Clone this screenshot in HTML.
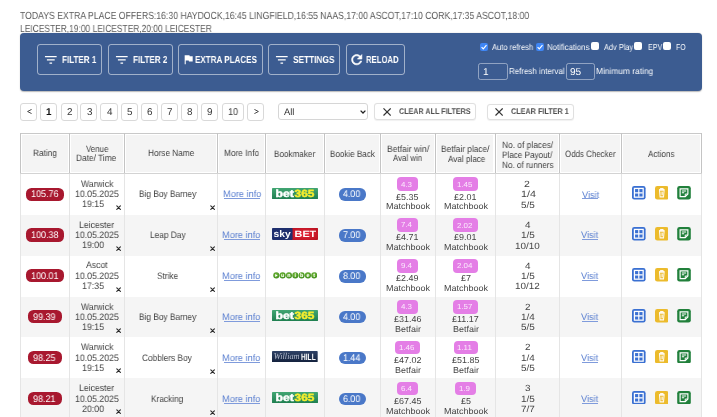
<!DOCTYPE html>
<html><head><meta charset="utf-8">
<style>
*{box-sizing:border-box;margin:0;padding:0}
html,body{width:717px;height:417px;overflow:hidden;background:#fff;font-family:"Liberation Sans",sans-serif;color:#444;text-rendering:geometricPrecision}
.t{position:absolute;white-space:nowrap;transform-origin:0 0;will-change:transform}
.b{position:absolute;display:block}
</style></head><body>
<span class="t" style="left:20.49px;top:9.61px;font-size:10.30px;line-height:14px;transform:scaleX(0.8409);color:#5a5a5a;">TODAYS EXTRA PLACE OFFERS:16:30 HAYDOCK,16:45 LINGFIELD,16:55 NAAS,17:00 ASCOT,17:10 CORK,17:35 ASCOT,18:00</span>
<span class="t" style="left:19.82px;top:22.71px;font-size:10.30px;line-height:14px;transform:scaleX(0.8175);color:#5a5a5a;">LEICESTER,19:00 LEICESTER,20:00 LEICESTER</span>
<div class="b" style="left:20.00px;top:33.00px;width:681.50px;height:58.20px;background:#3c5c91;border-radius:4px;box-shadow:0 0.8px 1.2px rgba(0,0,0,.28)"></div>
<div class="b" style="left:36.80px;top:44.40px;width:65.70px;height:30.40px;border:1px solid rgba(255,255,255,.52);border-radius:3px"></div>
<div class="b" style="left:107.80px;top:44.40px;width:65.00px;height:30.40px;border:1px solid rgba(255,255,255,.52);border-radius:3px"></div>
<div class="b" style="left:178.20px;top:44.40px;width:84.70px;height:30.40px;border:1px solid rgba(255,255,255,.52);border-radius:3px"></div>
<div class="b" style="left:268.30px;top:44.40px;width:71.60px;height:30.40px;border:1px solid rgba(255,255,255,.52);border-radius:3px"></div>
<div class="b" style="left:345.50px;top:44.40px;width:59.60px;height:30.40px;border:1px solid rgba(255,255,255,.52);border-radius:3px"></div>
<svg class="b" style="left:43.05px;top:52.1px" width="15.6" height="15.6" viewBox="0 0 24 24"><path d="M10 18h4v-2h-4v2zM3 6v2h18V6H3zm3 7h12v-2H6v2z" fill="#fff"/></svg>
<svg class="b" style="left:114.05px;top:52.1px" width="15.6" height="15.6" viewBox="0 0 24 24"><path d="M10 18h4v-2h-4v2zM3 6v2h18V6H3zm3 7h12v-2H6v2z" fill="#fff"/></svg>
<svg class="b" style="left:273.65px;top:52.1px" width="15.6" height="15.6" viewBox="0 0 24 24"><path d="M10 18h4v-2h-4v2zM3 6v2h18V6H3zm3 7h12v-2H6v2z" fill="#fff"/></svg>
<svg class="b" style="left:181.9px;top:52.66px" width="12.84" height="12.84" viewBox="0 0 24 24"><path d="M14.4 6L14 4H5v17h2v-7h5.6l.4 2h7V6z" fill="#fff"/></svg>
<svg class="b" style="left:349.2px;top:52.0px" width="15.45" height="15.45" viewBox="0 0 24 24"><path d="M17.65 6.35C16.2 4.9 14.21 4 12 4c-4.42 0-7.99 3.58-7.99 8s3.57 8 7.99 8c3.73 0 6.84-2.55 7.73-6h-2.08c-.82 2.33-3.04 4-5.65 4-3.31 0-6-2.69-6-6s2.69-6 6-6c1.66 0 3.14.69 4.22 1.78L13 11h7V4l-2.35 2.35z" fill="#fff" stroke="#fff" stroke-width="0.9"/></svg>
<span class="t" style="left:62.31px;top:53.71px;font-size:10.20px;line-height:14px;transform:scaleX(0.7908);color:#fff;font-weight:bold;">FILTER 1</span>
<span class="t" style="left:133.35px;top:53.64px;font-size:10.20px;line-height:14px;transform:scaleX(0.7926);color:#fff;font-weight:bold;">FILTER 2</span>
<span class="t" style="left:195.30px;top:53.64px;font-size:10.20px;line-height:14px;transform:scaleX(0.7905);color:#fff;font-weight:bold;">EXTRA PLACES</span>
<span class="t" style="left:293.38px;top:53.64px;font-size:10.20px;line-height:14px;transform:scaleX(0.8120);color:#fff;font-weight:bold;">SETTINGS</span>
<span class="t" style="left:366.44px;top:53.64px;font-size:10.20px;line-height:14px;transform:scaleX(0.7564);color:#fff;font-weight:bold;">RELOAD</span>
<div class="b" style="left:480.3px;top:43px;width:8.2px;height:8px;background:#3f86f5;border-radius:2px"><svg width="8" height="8" viewBox="0 0 8 8" style="display:block"><path d="M1.6 4.1l1.7 1.7 3.2-3.6" stroke="#fff" stroke-width="1.2" fill="none"/></svg></div>
<div class="b" style="left:535.7px;top:43px;width:8.2px;height:8px;background:#3f86f5;border-radius:2px"><svg width="8" height="8" viewBox="0 0 8 8" style="display:block"><path d="M1.6 4.1l1.7 1.7 3.2-3.6" stroke="#fff" stroke-width="1.2" fill="none"/></svg></div>
<div class="b" style="left:591.20px;top:42.40px;width:8.20px;height:8.00px;background:#fff;border-radius:2px"></div>
<div class="b" style="left:634.20px;top:42.40px;width:8.20px;height:8.00px;background:#fff;border-radius:2px"></div>
<div class="b" style="left:662.90px;top:42.40px;width:8.20px;height:8.00px;background:#fff;border-radius:2px"></div>
<span class="t" style="left:491.66px;top:40.53px;font-size:8.60px;line-height:12px;transform:scaleX(0.8796);color:#f7f9fc;">Auto refresh</span>
<span class="t" style="left:546.92px;top:40.61px;font-size:8.60px;line-height:12px;transform:scaleX(0.9046);color:#f7f9fc;">Notifications</span>
<span class="t" style="left:603.89px;top:40.60px;font-size:8.60px;line-height:12px;transform:scaleX(0.8591);color:#f7f9fc;">Adv Play</span>
<span class="t" style="left:647.58px;top:40.93px;font-size:8.60px;line-height:12px;transform:scaleX(0.8310);color:#f7f9fc;">EPV</span>
<span class="t" style="left:675.87px;top:41.02px;font-size:8.60px;line-height:12px;transform:scaleX(0.8019);color:#f7f9fc;">FO</span>
<div class="b" style="left:478.10px;top:63.20px;width:30.10px;height:16.70px;border:1px solid rgba(215,222,235,.55);border-radius:2.5px"></div>
<div class="b" style="left:565.90px;top:63.20px;width:29.10px;height:16.70px;border:1px solid rgba(215,222,235,.55);border-radius:2.5px"></div>
<span class="t" style="left:570.20px;top:65.55px;font-size:10.00px;line-height:13px;transform:scaleX(1.0112);color:#fff;">95</span>
<span class="t" style="left:482.53px;top:65.59px;font-size:10.00px;line-height:13px;transform:scaleX(1.0112);color:#fff;">1</span>
<span class="t" style="left:508.96px;top:65.10px;font-size:8.60px;line-height:12px;transform:scaleX(0.9223);color:#f7f9fc;">Refresh interval</span>
<span class="t" style="left:596.39px;top:65.15px;font-size:8.60px;line-height:12px;transform:scaleX(0.9731);color:#f7f9fc;">Minimum rating</span>
<div class="b" style="left:20.20px;top:103.30px;width:16.40px;height:17.30px;border:1px solid #d9d9d9;border-radius:3px;background:#fff"></div>
<div class="b" style="left:40.10px;top:103.30px;width:16.70px;height:17.30px;border:1px solid #d9d9d9;border-radius:3px;background:#fff"></div>
<div class="b" style="left:61.10px;top:103.30px;width:16.60px;height:17.30px;border:1px solid #d9d9d9;border-radius:3px;background:#fff"></div>
<div class="b" style="left:80.30px;top:103.30px;width:17.20px;height:17.30px;border:1px solid #d9d9d9;border-radius:3px;background:#fff"></div>
<div class="b" style="left:100.40px;top:103.30px;width:17.20px;height:17.30px;border:1px solid #d9d9d9;border-radius:3px;background:#fff"></div>
<div class="b" style="left:120.80px;top:103.30px;width:17.00px;height:17.30px;border:1px solid #d9d9d9;border-radius:3px;background:#fff"></div>
<div class="b" style="left:140.70px;top:103.30px;width:17.20px;height:17.30px;border:1px solid #d9d9d9;border-radius:3px;background:#fff"></div>
<div class="b" style="left:160.80px;top:103.30px;width:17.20px;height:17.30px;border:1px solid #d9d9d9;border-radius:3px;background:#fff"></div>
<div class="b" style="left:180.90px;top:103.30px;width:17.20px;height:17.30px;border:1px solid #d9d9d9;border-radius:3px;background:#fff"></div>
<div class="b" style="left:201.00px;top:103.30px;width:17.20px;height:17.30px;border:1px solid #d9d9d9;border-radius:3px;background:#fff"></div>
<div class="b" style="left:221.50px;top:103.30px;width:22.80px;height:17.30px;border:1px solid #d9d9d9;border-radius:3px;background:#fff"></div>
<div class="b" style="left:247.20px;top:103.30px;width:16.70px;height:17.30px;border:1px solid #d9d9d9;border-radius:3px;background:#fff"></div>
<svg class="b" style="left:26.5px;top:109.3px" width="5" height="5" viewBox="0 0 5 5"><path d="M4.6 0.4L0.6 2.5l4 2.1" stroke="#333" stroke-width="0.9" fill="none"/></svg>
<svg class="b" style="left:253.5px;top:109.3px" width="5" height="5" viewBox="0 0 5 5"><path d="M0.4 0.4L4.4 2.5l-4 2.1" stroke="#333" stroke-width="0.9" fill="none"/></svg>
<span class="t" style="left:66.57px;top:105.93px;font-size:9.90px;line-height:13px;transform:scaleX(0.9200);color:#3a3a3a;">2</span>
<span class="t" style="left:46.04px;top:105.83px;font-size:9.90px;line-height:13px;transform:scaleX(0.9233);color:#111;font-weight:bold;">1</span>
<span class="t" style="left:86.67px;top:105.93px;font-size:9.90px;line-height:13px;transform:scaleX(0.9200);color:#3a3a3a;">3</span>
<span class="t" style="left:106.82px;top:105.83px;font-size:9.90px;line-height:13px;transform:scaleX(0.9200);color:#3a3a3a;">4</span>
<span class="t" style="left:127.07px;top:105.83px;font-size:9.90px;line-height:13px;transform:scaleX(0.9200);color:#3a3a3a;">5</span>
<span class="t" style="left:147.03px;top:105.93px;font-size:9.90px;line-height:13px;transform:scaleX(0.9200);color:#3a3a3a;">6</span>
<span class="t" style="left:167.17px;top:105.83px;font-size:9.90px;line-height:13px;transform:scaleX(0.9200);color:#3a3a3a;">7</span>
<span class="t" style="left:187.25px;top:105.93px;font-size:9.90px;line-height:13px;transform:scaleX(0.9200);color:#3a3a3a;">8</span>
<span class="t" style="left:207.37px;top:105.93px;font-size:9.90px;line-height:13px;transform:scaleX(0.9200);color:#3a3a3a;">9</span>
<span class="t" style="left:227.96px;top:105.93px;font-size:9.90px;line-height:13px;transform:scaleX(0.9200);color:#3a3a3a;">10</span>
<div class="b" style="left:278.30px;top:103.30px;width:89.30px;height:16.80px;border:1px solid #d6d6d6;border-radius:3px;background:#fff"></div>
<span class="t" style="left:284.31px;top:105.43px;font-size:9.40px;line-height:13px;transform:scaleX(0.9950);color:#333;">All</span>
<svg class="b" style="left:359.6px;top:109.6px" width="6" height="4" viewBox="0 0 6 4"><path d="M0.6 0.6l2.4 2.4 2.4-2.4" stroke="#222" stroke-width="1.3" fill="none"/></svg>
<div class="b" style="left:373.60px;top:103.40px;width:102.50px;height:16.60px;border:1px solid #e0e0e0;border-radius:3px;background:#fff;box-shadow:0 0.5px 1px rgba(0,0,0,.06)"></div>
<div class="b" style="left:486.50px;top:103.60px;width:87.90px;height:16.50px;border:1px solid #e0e0e0;border-radius:3px;background:#fff;box-shadow:0 0.5px 1px rgba(0,0,0,.06)"></div>
<svg class="b" style="left:382.9px;top:108px" width="8.2" height="7.9" viewBox="0 0 8.2 7.9"><path d="M0.5 0.4l7.2 7.1M7.7 0.4l-7.2 7.1" stroke="#333" stroke-width="1.2"/></svg>
<svg class="b" style="left:495.3px;top:108px" width="8.2" height="7.9" viewBox="0 0 8.2 7.9"><path d="M0.5 0.4l7.2 7.1M7.7 0.4l-7.2 7.1" stroke="#333" stroke-width="1.2"/></svg>
<span class="t" style="left:398.50px;top:106.45px;font-size:8.30px;line-height:11px;transform:scaleX(0.8643);color:#505050;font-weight:bold;">CLEAR ALL FILTERS</span>
<span class="t" style="left:510.98px;top:106.45px;font-size:8.30px;line-height:11px;transform:scaleX(0.8722);color:#505050;font-weight:bold;">CLEAR FILTER 1</span>
<div class="b" style="left:21.60px;top:134.90px;width:46.20px;height:37.60px;background:#f4f4f4"></div>
<div class="b" style="left:71.00px;top:134.90px;width:52.00px;height:37.60px;background:#f4f4f4"></div>
<div class="b" style="left:126.20px;top:134.90px;width:89.50px;height:37.60px;background:#f4f4f4"></div>
<div class="b" style="left:218.90px;top:134.90px;width:44.80px;height:37.60px;background:#f4f4f4"></div>
<div class="b" style="left:266.90px;top:134.90px;width:55.90px;height:37.60px;background:#f4f4f4"></div>
<div class="b" style="left:326.00px;top:134.90px;width:52.60px;height:37.60px;background:#f4f4f4"></div>
<div class="b" style="left:381.80px;top:134.90px;width:52.00px;height:37.60px;background:#f4f4f4"></div>
<div class="b" style="left:437.00px;top:134.90px;width:56.40px;height:37.60px;background:#f4f4f4"></div>
<div class="b" style="left:496.60px;top:134.90px;width:61.20px;height:37.60px;background:#f4f4f4"></div>
<div class="b" style="left:561.00px;top:134.90px;width:59.10px;height:37.60px;background:#f4f4f4"></div>
<div class="b" style="left:623.30px;top:134.90px;width:76.60px;height:37.60px;background:#f4f4f4"></div>
<div class="b" style="left:20.00px;top:214.80px;width:681.50px;height:40.90px;background:#f5f5f5"></div>
<div class="b" style="left:20.00px;top:296.60px;width:681.50px;height:40.90px;background:#f5f5f5"></div>
<div class="b" style="left:20.00px;top:378.40px;width:681.50px;height:40.90px;background:#f5f5f5"></div>
<div class="b" style="left:19.50px;top:132.90px;width:682.50px;height:1.00px;background:#c9c9c9"></div>
<div class="b" style="left:19.50px;top:173.10px;width:682.50px;height:1.00px;background:#d3d3d3"></div>
<div class="b" style="left:19.50px;top:133.00px;width:1.00px;height:40.00px;background:#c4c4c4"></div>
<div class="b" style="left:19.50px;top:174.00px;width:1.00px;height:243.00px;background:#e5e5e5"></div>
<div class="b" style="left:68.90px;top:133.00px;width:1.00px;height:40.00px;background:#c4c4c4"></div>
<div class="b" style="left:68.90px;top:174.00px;width:1.00px;height:243.00px;background:#e5e5e5"></div>
<div class="b" style="left:124.10px;top:133.00px;width:1.00px;height:40.00px;background:#c4c4c4"></div>
<div class="b" style="left:124.10px;top:174.00px;width:1.00px;height:243.00px;background:#e5e5e5"></div>
<div class="b" style="left:216.80px;top:133.00px;width:1.00px;height:40.00px;background:#c4c4c4"></div>
<div class="b" style="left:216.80px;top:174.00px;width:1.00px;height:243.00px;background:#e5e5e5"></div>
<div class="b" style="left:264.80px;top:133.00px;width:1.00px;height:40.00px;background:#c4c4c4"></div>
<div class="b" style="left:264.80px;top:174.00px;width:1.00px;height:243.00px;background:#e5e5e5"></div>
<div class="b" style="left:323.90px;top:133.00px;width:1.00px;height:40.00px;background:#c4c4c4"></div>
<div class="b" style="left:323.90px;top:174.00px;width:1.00px;height:243.00px;background:#e5e5e5"></div>
<div class="b" style="left:379.70px;top:133.00px;width:1.00px;height:40.00px;background:#c4c4c4"></div>
<div class="b" style="left:379.70px;top:174.00px;width:1.00px;height:243.00px;background:#e5e5e5"></div>
<div class="b" style="left:434.90px;top:133.00px;width:1.00px;height:40.00px;background:#c4c4c4"></div>
<div class="b" style="left:434.90px;top:174.00px;width:1.00px;height:243.00px;background:#e5e5e5"></div>
<div class="b" style="left:494.50px;top:133.00px;width:1.00px;height:40.00px;background:#c4c4c4"></div>
<div class="b" style="left:494.50px;top:174.00px;width:1.00px;height:243.00px;background:#e5e5e5"></div>
<div class="b" style="left:558.90px;top:133.00px;width:1.00px;height:40.00px;background:#c4c4c4"></div>
<div class="b" style="left:558.90px;top:174.00px;width:1.00px;height:243.00px;background:#e5e5e5"></div>
<div class="b" style="left:621.20px;top:133.00px;width:1.00px;height:40.00px;background:#c4c4c4"></div>
<div class="b" style="left:621.20px;top:174.00px;width:1.00px;height:243.00px;background:#e5e5e5"></div>
<div class="b" style="left:701.00px;top:133.00px;width:1.00px;height:40.00px;background:#c4c4c4"></div>
<div class="b" style="left:701.00px;top:174.00px;width:1.00px;height:243.00px;background:#e5e5e5"></div>
<span class="t" style="left:33.26px;top:147.13px;font-size:9.20px;line-height:12px;transform:scaleX(0.8982);color:#404040;">Rating</span>
<span class="t" style="left:86.08px;top:142.53px;font-size:9.20px;line-height:12px;transform:scaleX(0.8636);color:#404040;">Venue</span>
<span class="t" style="left:76.36px;top:151.82px;font-size:9.20px;line-height:12px;transform:scaleX(0.9072);color:#404040;">Date/ Time</span>
<span class="t" style="left:148.25px;top:146.85px;font-size:9.20px;line-height:12px;transform:scaleX(0.8969);color:#404040;">Horse Name</span>
<span class="t" style="left:224.27px;top:147.49px;font-size:9.20px;line-height:12px;transform:scaleX(0.9041);color:#404040;">More Info</span>
<span class="t" style="left:274.03px;top:147.72px;font-size:9.20px;line-height:12px;transform:scaleX(0.8835);color:#404040;">Bookmaker</span>
<span class="t" style="left:329.59px;top:147.69px;font-size:9.20px;line-height:12px;transform:scaleX(0.8770);color:#404040;">Bookie Back</span>
<span class="t" style="left:386.51px;top:142.95px;font-size:9.20px;line-height:12px;transform:scaleX(0.9268);color:#404040;">Betfair win/</span>
<span class="t" style="left:393.49px;top:151.83px;font-size:9.20px;line-height:12px;transform:scaleX(0.8546);color:#404040;">Aval win</span>
<span class="t" style="left:441.31px;top:142.87px;font-size:9.20px;line-height:12px;transform:scaleX(0.9037);color:#404040;">Betfair place/</span>
<span class="t" style="left:447.71px;top:153.16px;font-size:9.20px;line-height:12px;transform:scaleX(0.8855);color:#404040;">Aval place</span>
<span class="t" style="left:501.99px;top:138.84px;font-size:9.20px;line-height:12px;transform:scaleX(0.9124);color:#404040;">No. of places/</span>
<span class="t" style="left:502.39px;top:149.28px;font-size:9.20px;line-height:12px;transform:scaleX(0.8858);color:#404040;">Place Payout/</span>
<span class="t" style="left:502.01px;top:159.08px;font-size:9.20px;line-height:12px;transform:scaleX(0.8861);color:#404040;">No. of runners</span>
<span class="t" style="left:565.17px;top:147.80px;font-size:9.20px;line-height:12px;transform:scaleX(0.8616);color:#404040;">Odds Checker</span>
<span class="t" style="left:648.39px;top:147.66px;font-size:9.20px;line-height:12px;transform:scaleX(0.8785);color:#404040;">Actions</span>
<div class="b" style="left:25.98px;top:187.50px;width:38.25px;height:13.20px;background:#a8182f;border-radius:5.5px"></div>
<span class="t" style="left:31.14px;top:188.41px;font-size:9.70px;line-height:13px;transform:scaleX(0.9302);color:#fff;">105.76</span>
<span class="t" style="left:81.12px;top:176.80px;font-size:9.40px;line-height:13px;transform:scaleX(0.9233);color:#444444;">Warwick</span>
<span class="t" style="left:75.27px;top:187.28px;font-size:9.40px;line-height:13px;transform:scaleX(0.9339);color:#444444;">10.05.2025</span>
<span class="t" style="left:82.39px;top:197.06px;font-size:9.40px;line-height:13px;transform:scaleX(0.9404);color:#444444;">19:15</span>
<svg class="b" style="left:116.40px;top:204.80px" width="5.2" height="5.2" viewBox="0 0 5.2 5.2"><path d="M0.8 0.8l3.6 3.6M4.4 0.8l-3.6 3.6" stroke="#2a2a2a" stroke-width="1.15" stroke-linecap="round"/></svg>
<svg class="b" style="left:210.00px;top:205.00px" width="5.2" height="5.2" viewBox="0 0 5.2 5.2"><path d="M0.8 0.8l3.6 3.6M4.4 0.8l-3.6 3.6" stroke="#2a2a2a" stroke-width="1.15" stroke-linecap="round"/></svg>
<span class="t" style="left:138.72px;top:187.34px;font-size:9.40px;line-height:13px;transform:scaleX(0.8849);color:#444444;">Big Boy Barney</span>
<span class="t" style="left:222.54px;top:188.30px;font-size:9.50px;line-height:13px;transform:scaleX(0.9671);color:#5a7fd0;">More info</span>
<div class="b" style="left:223.70px;top:198.00px;width:36.10px;height:0.80px;background:#7f9bdc"></div>
<svg class="b" style="left:272px;top:187.70px" width="46" height="11.1" viewBox="0 0 46 11.1"><defs><linearGradient id="g365" x1="0" y1="0" x2="0" y2="1"><stop offset="0" stop-color="#42a673"/><stop offset="1" stop-color="#1f7f50"/></linearGradient></defs><rect width="46" height="11.1" rx="0.6" fill="url(#g365)"/><text x="3.6" y="9.0" font-family="Liberation Sans" font-weight="bold" font-size="10.4" fill="#fff" stroke="#fff" stroke-width="0.45" textLength="18.3" lengthAdjust="spacingAndGlyphs">bet</text><text x="22.6" y="9.0" font-family="Liberation Sans" font-weight="bold" font-size="10.4" fill="#f4ec2e" stroke="#f4ec2e" stroke-width="0.45" textLength="19.8" lengthAdjust="spacingAndGlyphs">365</text></svg>
<div class="b" style="left:338.60px;top:188.00px;width:27.40px;height:12.80px;background:#4a78c8;border-radius:6px"></div>
<span class="t" style="left:343.45px;top:188.27px;font-size:9.70px;line-height:13px;transform:scaleX(0.9140);color:#fff;">4.00</span>
<div class="b" style="left:396.79px;top:177.00px;width:21.62px;height:13.90px;background:#e47ee6;border-radius:4px"></div>
<div class="b" style="left:453.32px;top:177.00px;width:24.86px;height:13.90px;background:#e47ee6;border-radius:4px"></div>
<span class="t" style="left:457.21px;top:179.54px;font-size:7.30px;line-height:10px;transform:scaleX(1.0852);color:#fbeafc;">1.45</span>
<span class="t" style="left:454.24px;top:190.54px;font-size:8.60px;line-height:12px;transform:scaleX(1.0411);color:#444444;">£2.01</span>
<span class="t" style="left:444.03px;top:200.38px;font-size:8.60px;line-height:12px;transform:scaleX(1.0471);color:#444444;">Matchbook</span>
<span class="t" style="left:401.13px;top:179.62px;font-size:7.30px;line-height:10px;transform:scaleX(1.0852);color:#fbeafc;">4.3</span>
<span class="t" style="left:396.41px;top:190.54px;font-size:8.60px;line-height:12px;transform:scaleX(1.0411);color:#444444;">£5.35</span>
<span class="t" style="left:385.52px;top:200.38px;font-size:8.60px;line-height:12px;transform:scaleX(1.0471);color:#444444;">Matchbook</span>
<span class="t" style="left:521.14px;top:198.64px;font-size:9.00px;line-height:12px;transform:scaleX(1.1007);color:#444444;">5/5</span>
<span class="t" style="left:524.39px;top:177.82px;font-size:9.00px;line-height:12px;transform:scaleX(1.1669);color:#444444;">2</span>
<span class="t" style="left:520.66px;top:188.15px;font-size:9.00px;line-height:12px;transform:scaleX(1.1898);color:#444444;">1/4</span>
<span class="t" style="left:581.68px;top:188.51px;font-size:9.50px;line-height:13px;transform:scaleX(0.9621);color:#5a7fd0;">Visit</span>
<div class="b" style="left:582.30px;top:198.20px;width:16.10px;height:0.80px;background:#7f9bdc"></div>
<svg class="b" style="left:632.3px;top:186.30px" width="13.6" height="13.6" viewBox="0 0 14 14"><rect width="14" height="14" rx="2.4" fill="#3a70d2"/><rect x="2.5" y="2.5" width="9" height="9" fill="none" stroke="#fff" stroke-width="1.3"/><path d="M7 3v8M3 7h8" stroke="#fff" stroke-width="1.2"/></svg><svg class="b" style="left:654.8px;top:186.30px" width="13.6" height="13.6" viewBox="0 0 14 14"><rect width="14" height="14" rx="2.4" fill="#ecbb2c"/><path d="M4.2 3.6h5.6M5.8 3.4v-0.8h2.4v0.8M4.6 4.4l0.6 6.8h3.6l0.6-6.8z" stroke="#fffaf0" stroke-width="1.05" fill="none"/><path d="M6.3 5.8v3.8M7.7 5.8v3.8" stroke="#fffaf0" stroke-width="0.8"/></svg><svg class="b" style="left:677px;top:186.30px" width="14" height="13.6" viewBox="0 0 14 14"><rect width="14" height="14" rx="2.4" fill="#21803b"/><path d="M3 3h8v5.3l-2.7 2.7h-5.3z" fill="none" stroke="#fff" stroke-width="1.2"/><path d="M8.3 11v-2.7h2.7" fill="none" stroke="#fff" stroke-width="1"/><path d="M4.8 5.2h4.4M4.8 7h2.4" stroke="#fff" stroke-width="1.1"/></svg>
<div class="b" style="left:25.98px;top:228.40px;width:38.25px;height:13.20px;background:#a8182f;border-radius:5.5px"></div>
<span class="t" style="left:30.55px;top:229.31px;font-size:9.70px;line-height:13px;transform:scaleX(0.9302);color:#fff;">100.38</span>
<span class="t" style="left:79.14px;top:217.70px;font-size:9.40px;line-height:13px;transform:scaleX(0.9233);color:#444444;">Leicester</span>
<span class="t" style="left:74.60px;top:228.18px;font-size:9.40px;line-height:13px;transform:scaleX(0.9339);color:#444444;">10.05.2025</span>
<span class="t" style="left:82.18px;top:237.96px;font-size:9.40px;line-height:13px;transform:scaleX(0.9404);color:#444444;">19:00</span>
<svg class="b" style="left:116.40px;top:245.70px" width="5.2" height="5.2" viewBox="0 0 5.2 5.2"><path d="M0.8 0.8l3.6 3.6M4.4 0.8l-3.6 3.6" stroke="#2a2a2a" stroke-width="1.15" stroke-linecap="round"/></svg>
<svg class="b" style="left:210.00px;top:245.90px" width="5.2" height="5.2" viewBox="0 0 5.2 5.2"><path d="M0.8 0.8l3.6 3.6M4.4 0.8l-3.6 3.6" stroke="#2a2a2a" stroke-width="1.15" stroke-linecap="round"/></svg>
<span class="t" style="left:149.51px;top:227.91px;font-size:9.40px;line-height:13px;transform:scaleX(0.8849);color:#444444;">Leap Day</span>
<span class="t" style="left:222.01px;top:229.20px;font-size:9.50px;line-height:13px;transform:scaleX(0.9671);color:#5a7fd0;">More info</span>
<div class="b" style="left:223.70px;top:238.90px;width:36.10px;height:0.80px;background:#7f9bdc"></div>
<svg class="b" style="left:271.9px;top:228.00px" width="46.2" height="11.9" viewBox="0 0 46.2 11.9"><defs><radialGradient id="gsr" cx="0.5" cy="0.5" r="0.7"><stop offset="0" stop-color="#e8283a"/><stop offset="1" stop-color="#b5101f"/></radialGradient></defs><rect x="18" width="28.2" height="11.9" rx="1" fill="url(#gsr)"/><rect width="20.6" height="11.9" rx="0.8" fill="#1f2f6e"/><text x="1.6" y="8.9" font-family="Liberation Sans" font-weight="bold" font-size="9.6" fill="#fff" textLength="17.2" lengthAdjust="spacingAndGlyphs">sky</text><text x="22.6" y="8.7" font-family="Liberation Sans" font-weight="bold" font-size="9.2" fill="#fff" textLength="21.6" lengthAdjust="spacingAndGlyphs">BET</text></svg>
<div class="b" style="left:338.60px;top:228.90px;width:27.40px;height:12.80px;background:#4a78c8;border-radius:6px"></div>
<span class="t" style="left:342.98px;top:229.17px;font-size:9.70px;line-height:13px;transform:scaleX(0.9140);color:#fff;">7.00</span>
<div class="b" style="left:396.86px;top:217.90px;width:21.49px;height:13.90px;background:#e47ee6;border-radius:4px"></div>
<div class="b" style="left:453.27px;top:217.90px;width:24.96px;height:13.90px;background:#e47ee6;border-radius:4px"></div>
<span class="t" style="left:400.97px;top:220.44px;font-size:7.30px;line-height:10px;transform:scaleX(1.0852);color:#fbeafc;">7.4</span>
<span class="t" style="left:396.43px;top:231.44px;font-size:8.60px;line-height:12px;transform:scaleX(1.0411);color:#444444;">£4.71</span>
<span class="t" style="left:385.52px;top:241.28px;font-size:8.60px;line-height:12px;transform:scaleX(1.0471);color:#444444;">Matchbook</span>
<span class="t" style="left:456.85px;top:220.52px;font-size:7.30px;line-height:10px;transform:scaleX(1.0852);color:#fbeafc;">2.02</span>
<span class="t" style="left:454.43px;top:231.44px;font-size:8.60px;line-height:12px;transform:scaleX(1.0411);color:#444444;">£9.01</span>
<span class="t" style="left:443.52px;top:241.28px;font-size:8.60px;line-height:12px;transform:scaleX(1.0471);color:#444444;">Matchbook</span>
<span class="t" style="left:524.87px;top:218.63px;font-size:9.00px;line-height:12px;transform:scaleX(1.1007);color:#444444;">4</span>
<span class="t" style="left:520.72px;top:229.10px;font-size:9.00px;line-height:12px;transform:scaleX(1.1007);color:#444444;">1/5</span>
<span class="t" style="left:515.16px;top:239.54px;font-size:9.00px;line-height:12px;transform:scaleX(1.1007);color:#444444;">10/10</span>
<span class="t" style="left:581.23px;top:229.41px;font-size:9.50px;line-height:13px;transform:scaleX(0.9621);color:#5a7fd0;">Visit</span>
<div class="b" style="left:582.30px;top:239.10px;width:16.10px;height:0.80px;background:#7f9bdc"></div>
<svg class="b" style="left:632.3px;top:227.20px" width="13.6" height="13.6" viewBox="0 0 14 14"><rect width="14" height="14" rx="2.4" fill="#3a70d2"/><rect x="2.5" y="2.5" width="9" height="9" fill="none" stroke="#fff" stroke-width="1.3"/><path d="M7 3v8M3 7h8" stroke="#fff" stroke-width="1.2"/></svg><svg class="b" style="left:654.8px;top:227.20px" width="13.6" height="13.6" viewBox="0 0 14 14"><rect width="14" height="14" rx="2.4" fill="#ecbb2c"/><path d="M4.2 3.6h5.6M5.8 3.4v-0.8h2.4v0.8M4.6 4.4l0.6 6.8h3.6l0.6-6.8z" stroke="#fffaf0" stroke-width="1.05" fill="none"/><path d="M6.3 5.8v3.8M7.7 5.8v3.8" stroke="#fffaf0" stroke-width="0.8"/></svg><svg class="b" style="left:677px;top:227.20px" width="14" height="13.6" viewBox="0 0 14 14"><rect width="14" height="14" rx="2.4" fill="#21803b"/><path d="M3 3h8v5.3l-2.7 2.7h-5.3z" fill="none" stroke="#fff" stroke-width="1.2"/><path d="M8.3 11v-2.7h2.7" fill="none" stroke="#fff" stroke-width="1"/><path d="M4.8 5.2h4.4M4.8 7h2.4" stroke="#fff" stroke-width="1.1"/></svg>
<div class="b" style="left:26.00px;top:269.30px;width:38.21px;height:13.20px;background:#a8182f;border-radius:5.5px"></div>
<span class="t" style="left:30.57px;top:270.21px;font-size:9.70px;line-height:13px;transform:scaleX(0.9302);color:#fff;">100.01</span>
<span class="t" style="left:86.19px;top:258.27px;font-size:9.40px;line-height:13px;transform:scaleX(0.9233);color:#444444;">Ascot</span>
<span class="t" style="left:74.60px;top:269.08px;font-size:9.40px;line-height:13px;transform:scaleX(0.9339);color:#444444;">10.05.2025</span>
<span class="t" style="left:82.20px;top:278.86px;font-size:9.40px;line-height:13px;transform:scaleX(0.9404);color:#444444;">17:35</span>
<svg class="b" style="left:116.40px;top:286.60px" width="5.2" height="5.2" viewBox="0 0 5.2 5.2"><path d="M0.8 0.8l3.6 3.6M4.4 0.8l-3.6 3.6" stroke="#2a2a2a" stroke-width="1.15" stroke-linecap="round"/></svg>
<svg class="b" style="left:210.00px;top:286.80px" width="5.2" height="5.2" viewBox="0 0 5.2 5.2"><path d="M0.8 0.8l3.6 3.6M4.4 0.8l-3.6 3.6" stroke="#2a2a2a" stroke-width="1.15" stroke-linecap="round"/></svg>
<span class="t" style="left:157.01px;top:269.14px;font-size:9.40px;line-height:13px;transform:scaleX(0.8849);color:#444444;">Strike</span>
<span class="t" style="left:222.01px;top:270.10px;font-size:9.50px;line-height:13px;transform:scaleX(0.9671);color:#5a7fd0;">More info</span>
<div class="b" style="left:223.70px;top:279.80px;width:36.10px;height:0.80px;background:#7f9bdc"></div>
<svg class="b" style="left:272.8px;top:271.80px" width="44.6" height="6.8" viewBox="0 0 44.6 6.8"><defs><radialGradient id="gub" cx="0.45" cy="0.4" r="0.6"><stop offset="0" stop-color="#7cc040"/><stop offset="1" stop-color="#3f8c1c"/></radialGradient></defs><circle cx="3.30" cy="3.4" r="3.05" fill="url(#gub)"/><circle cx="9.63" cy="3.4" r="3.05" fill="url(#gub)"/><circle cx="15.96" cy="3.4" r="3.05" fill="url(#gub)"/><circle cx="22.29" cy="3.4" r="3.05" fill="url(#gub)"/><circle cx="28.62" cy="3.4" r="3.05" fill="url(#gub)"/><circle cx="34.95" cy="3.4" r="3.05" fill="url(#gub)"/><circle cx="41.28" cy="3.4" r="3.05" fill="url(#gub)"/><path d="M2.2 1.9l2.5 1.5-2.5 1.5z" fill="#fff"/><text x="9.63" y="5.3" font-family="Liberation Sans" font-weight="bold" font-size="5.4" fill="#fff" text-anchor="middle">u</text><text x="15.96" y="5.3" font-family="Liberation Sans" font-weight="bold" font-size="5.4" fill="#fff" text-anchor="middle">n</text><text x="22.29" y="5.3" font-family="Liberation Sans" font-weight="bold" font-size="5.4" fill="#fff" text-anchor="middle">i</text><text x="28.62" y="5.3" font-family="Liberation Sans" font-weight="bold" font-size="5.4" fill="#fff" text-anchor="middle">b</text><text x="34.95" y="5.3" font-family="Liberation Sans" font-weight="bold" font-size="5.4" fill="#fff" text-anchor="middle">e</text><text x="41.28" y="5.3" font-family="Liberation Sans" font-weight="bold" font-size="5.4" fill="#fff" text-anchor="middle">t</text></svg>
<div class="b" style="left:338.60px;top:269.80px;width:27.40px;height:12.80px;background:#4a78c8;border-radius:6px"></div>
<span class="t" style="left:343.01px;top:270.07px;font-size:9.70px;line-height:13px;transform:scaleX(0.9140);color:#fff;">8.00</span>
<div class="b" style="left:396.84px;top:258.80px;width:21.52px;height:13.90px;background:#e47ee6;border-radius:4px"></div>
<div class="b" style="left:453.21px;top:258.80px;width:25.09px;height:13.90px;background:#e47ee6;border-radius:4px"></div>
<span class="t" style="left:400.99px;top:261.42px;font-size:7.30px;line-height:10px;transform:scaleX(1.0852);color:#fbeafc;">9.4</span>
<span class="t" style="left:396.43px;top:272.34px;font-size:8.60px;line-height:12px;transform:scaleX(1.0411);color:#444444;">£2.49</span>
<span class="t" style="left:385.52px;top:282.18px;font-size:8.60px;line-height:12px;transform:scaleX(1.0471);color:#444444;">Matchbook</span>
<span class="t" style="left:456.77px;top:261.42px;font-size:7.30px;line-height:10px;transform:scaleX(1.0852);color:#fbeafc;">2.04</span>
<span class="t" style="left:460.67px;top:272.34px;font-size:8.60px;line-height:12px;transform:scaleX(1.0411);color:#444444;">£7</span>
<span class="t" style="left:443.52px;top:282.18px;font-size:8.60px;line-height:12px;transform:scaleX(1.0471);color:#444444;">Matchbook</span>
<span class="t" style="left:524.87px;top:259.53px;font-size:9.00px;line-height:12px;transform:scaleX(1.1007);color:#444444;">4</span>
<span class="t" style="left:520.72px;top:270.00px;font-size:9.00px;line-height:12px;transform:scaleX(1.1007);color:#444444;">1/5</span>
<span class="t" style="left:515.23px;top:280.44px;font-size:9.00px;line-height:12px;transform:scaleX(1.1007);color:#444444;">10/12</span>
<span class="t" style="left:581.23px;top:270.31px;font-size:9.50px;line-height:13px;transform:scaleX(0.9621);color:#5a7fd0;">Visit</span>
<div class="b" style="left:582.30px;top:280.00px;width:16.10px;height:0.80px;background:#7f9bdc"></div>
<svg class="b" style="left:632.3px;top:268.10px" width="13.6" height="13.6" viewBox="0 0 14 14"><rect width="14" height="14" rx="2.4" fill="#3a70d2"/><rect x="2.5" y="2.5" width="9" height="9" fill="none" stroke="#fff" stroke-width="1.3"/><path d="M7 3v8M3 7h8" stroke="#fff" stroke-width="1.2"/></svg><svg class="b" style="left:654.8px;top:268.10px" width="13.6" height="13.6" viewBox="0 0 14 14"><rect width="14" height="14" rx="2.4" fill="#ecbb2c"/><path d="M4.2 3.6h5.6M5.8 3.4v-0.8h2.4v0.8M4.6 4.4l0.6 6.8h3.6l0.6-6.8z" stroke="#fffaf0" stroke-width="1.05" fill="none"/><path d="M6.3 5.8v3.8M7.7 5.8v3.8" stroke="#fffaf0" stroke-width="0.8"/></svg><svg class="b" style="left:677px;top:268.10px" width="14" height="13.6" viewBox="0 0 14 14"><rect width="14" height="14" rx="2.4" fill="#21803b"/><path d="M3 3h8v5.3l-2.7 2.7h-5.3z" fill="none" stroke="#fff" stroke-width="1.2"/><path d="M8.3 11v-2.7h2.7" fill="none" stroke="#fff" stroke-width="1"/><path d="M4.8 5.2h4.4M4.8 7h2.4" stroke="#fff" stroke-width="1.1"/></svg>
<div class="b" style="left:28.13px;top:310.20px;width:33.93px;height:13.20px;background:#a8182f;border-radius:5.5px"></div>
<span class="t" style="left:33.24px;top:311.11px;font-size:9.70px;line-height:13px;transform:scaleX(0.9302);color:#fff;">99.39</span>
<span class="t" style="left:80.77px;top:299.50px;font-size:9.40px;line-height:13px;transform:scaleX(0.9233);color:#444444;">Warwick</span>
<span class="t" style="left:74.60px;top:309.98px;font-size:9.40px;line-height:13px;transform:scaleX(0.9339);color:#444444;">10.05.2025</span>
<span class="t" style="left:82.20px;top:319.76px;font-size:9.40px;line-height:13px;transform:scaleX(0.9404);color:#444444;">19:15</span>
<svg class="b" style="left:116.40px;top:327.50px" width="5.2" height="5.2" viewBox="0 0 5.2 5.2"><path d="M0.8 0.8l3.6 3.6M4.4 0.8l-3.6 3.6" stroke="#2a2a2a" stroke-width="1.15" stroke-linecap="round"/></svg>
<svg class="b" style="left:210.00px;top:327.70px" width="5.2" height="5.2" viewBox="0 0 5.2 5.2"><path d="M0.8 0.8l3.6 3.6M4.4 0.8l-3.6 3.6" stroke="#2a2a2a" stroke-width="1.15" stroke-linecap="round"/></svg>
<span class="t" style="left:138.63px;top:310.04px;font-size:9.40px;line-height:13px;transform:scaleX(0.8849);color:#444444;">Big Boy Barney</span>
<span class="t" style="left:222.01px;top:311.00px;font-size:9.50px;line-height:13px;transform:scaleX(0.9671);color:#5a7fd0;">More info</span>
<div class="b" style="left:223.70px;top:320.70px;width:36.10px;height:0.80px;background:#7f9bdc"></div>
<svg class="b" style="left:272px;top:310.40px" width="46" height="11.1" viewBox="0 0 46 11.1"><defs><linearGradient id="g365" x1="0" y1="0" x2="0" y2="1"><stop offset="0" stop-color="#42a673"/><stop offset="1" stop-color="#1f7f50"/></linearGradient></defs><rect width="46" height="11.1" rx="0.6" fill="url(#g365)"/><text x="3.6" y="9.0" font-family="Liberation Sans" font-weight="bold" font-size="10.4" fill="#fff" stroke="#fff" stroke-width="0.45" textLength="18.3" lengthAdjust="spacingAndGlyphs">bet</text><text x="22.6" y="9.0" font-family="Liberation Sans" font-weight="bold" font-size="10.4" fill="#f4ec2e" stroke="#f4ec2e" stroke-width="0.45" textLength="19.8" lengthAdjust="spacingAndGlyphs">365</text></svg>
<div class="b" style="left:338.60px;top:310.70px;width:27.40px;height:12.80px;background:#4a78c8;border-radius:6px"></div>
<span class="t" style="left:343.12px;top:310.97px;font-size:9.70px;line-height:13px;transform:scaleX(0.9140);color:#fff;">4.00</span>
<div class="b" style="left:396.79px;top:299.70px;width:21.62px;height:13.90px;background:#e47ee6;border-radius:4px"></div>
<div class="b" style="left:453.35px;top:299.70px;width:24.79px;height:13.90px;background:#e47ee6;border-radius:4px"></div>
<span class="t" style="left:401.13px;top:302.32px;font-size:7.30px;line-height:10px;transform:scaleX(1.0852);color:#fbeafc;">4.3</span>
<span class="t" style="left:393.90px;top:313.24px;font-size:8.60px;line-height:12px;transform:scaleX(1.0411);color:#444444;">£31.46</span>
<span class="t" style="left:394.62px;top:323.08px;font-size:8.60px;line-height:12px;transform:scaleX(1.0471);color:#444444;">Betfair</span>
<span class="t" style="left:456.75px;top:302.24px;font-size:7.30px;line-height:10px;transform:scaleX(1.0852);color:#fbeafc;">1.57</span>
<span class="t" style="left:452.28px;top:313.24px;font-size:8.60px;line-height:12px;transform:scaleX(1.0411);color:#444444;">£11.17</span>
<span class="t" style="left:452.62px;top:323.08px;font-size:8.60px;line-height:12px;transform:scaleX(1.0471);color:#444444;">Betfair</span>
<span class="t" style="left:524.82px;top:300.52px;font-size:9.00px;line-height:12px;transform:scaleX(1.1007);color:#444444;">2</span>
<span class="t" style="left:520.67px;top:310.90px;font-size:9.00px;line-height:12px;transform:scaleX(1.1007);color:#444444;">1/4</span>
<span class="t" style="left:520.85px;top:321.34px;font-size:9.00px;line-height:12px;transform:scaleX(1.1007);color:#444444;">5/5</span>
<span class="t" style="left:581.23px;top:311.21px;font-size:9.50px;line-height:13px;transform:scaleX(0.9621);color:#5a7fd0;">Visit</span>
<div class="b" style="left:582.30px;top:320.90px;width:16.10px;height:0.80px;background:#7f9bdc"></div>
<svg class="b" style="left:632.3px;top:309.00px" width="13.6" height="13.6" viewBox="0 0 14 14"><rect width="14" height="14" rx="2.4" fill="#3a70d2"/><rect x="2.5" y="2.5" width="9" height="9" fill="none" stroke="#fff" stroke-width="1.3"/><path d="M7 3v8M3 7h8" stroke="#fff" stroke-width="1.2"/></svg><svg class="b" style="left:654.8px;top:309.00px" width="13.6" height="13.6" viewBox="0 0 14 14"><rect width="14" height="14" rx="2.4" fill="#ecbb2c"/><path d="M4.2 3.6h5.6M5.8 3.4v-0.8h2.4v0.8M4.6 4.4l0.6 6.8h3.6l0.6-6.8z" stroke="#fffaf0" stroke-width="1.05" fill="none"/><path d="M6.3 5.8v3.8M7.7 5.8v3.8" stroke="#fffaf0" stroke-width="0.8"/></svg><svg class="b" style="left:677px;top:309.00px" width="14" height="13.6" viewBox="0 0 14 14"><rect width="14" height="14" rx="2.4" fill="#21803b"/><path d="M3 3h8v5.3l-2.7 2.7h-5.3z" fill="none" stroke="#fff" stroke-width="1.2"/><path d="M8.3 11v-2.7h2.7" fill="none" stroke="#fff" stroke-width="1"/><path d="M4.8 5.2h4.4M4.8 7h2.4" stroke="#fff" stroke-width="1.1"/></svg>
<div class="b" style="left:28.11px;top:351.10px;width:33.97px;height:13.20px;background:#a8182f;border-radius:5.5px"></div>
<span class="t" style="left:33.21px;top:352.01px;font-size:9.70px;line-height:13px;transform:scaleX(0.9302);color:#fff;">98.25</span>
<span class="t" style="left:80.77px;top:340.40px;font-size:9.40px;line-height:13px;transform:scaleX(0.9233);color:#444444;">Warwick</span>
<span class="t" style="left:74.60px;top:350.88px;font-size:9.40px;line-height:13px;transform:scaleX(0.9339);color:#444444;">10.05.2025</span>
<span class="t" style="left:82.20px;top:360.66px;font-size:9.40px;line-height:13px;transform:scaleX(0.9404);color:#444444;">19:15</span>
<svg class="b" style="left:116.40px;top:368.40px" width="5.2" height="5.2" viewBox="0 0 5.2 5.2"><path d="M0.8 0.8l3.6 3.6M4.4 0.8l-3.6 3.6" stroke="#2a2a2a" stroke-width="1.15" stroke-linecap="round"/></svg>
<svg class="b" style="left:210.00px;top:368.60px" width="5.2" height="5.2" viewBox="0 0 5.2 5.2"><path d="M0.8 0.8l3.6 3.6M4.4 0.8l-3.6 3.6" stroke="#2a2a2a" stroke-width="1.15" stroke-linecap="round"/></svg>
<span class="t" style="left:142.46px;top:350.94px;font-size:9.40px;line-height:13px;transform:scaleX(0.8849);color:#444444;">Cobblers Boy</span>
<span class="t" style="left:222.01px;top:351.90px;font-size:9.50px;line-height:13px;transform:scaleX(0.9671);color:#5a7fd0;">More info</span>
<div class="b" style="left:223.70px;top:361.60px;width:36.10px;height:0.80px;background:#7f9bdc"></div>
<svg class="b" style="left:272.1px;top:351.10px" width="45.7" height="11.3" viewBox="0 0 45.7 11.3"><defs><linearGradient id="gwh" x1="0" y1="0" x2="0" y2="1"><stop offset="0" stop-color="#2f4266"/><stop offset="1" stop-color="#13213d"/></linearGradient></defs><rect width="45.7" height="11.3" rx="0.8" fill="url(#gwh)"/><text x="1.8" y="8.4" font-family="Liberation Serif" font-style="italic" font-size="9" fill="#b4bccd" textLength="25.8" lengthAdjust="spacingAndGlyphs">William</text><text x="29.0" y="8.8" font-family="Liberation Sans" font-weight="bold" font-size="9.1" fill="#fff" textLength="14.7" lengthAdjust="spacingAndGlyphs">HILL</text></svg>
<div class="b" style="left:338.60px;top:351.60px;width:27.40px;height:12.80px;background:#4a78c8;border-radius:6px"></div>
<span class="t" style="left:342.85px;top:351.78px;font-size:9.70px;line-height:13px;transform:scaleX(0.9140);color:#fff;">1.44</span>
<div class="b" style="left:395.17px;top:340.60px;width:24.86px;height:13.90px;background:#e47ee6;border-radius:4px"></div>
<div class="b" style="left:453.58px;top:340.60px;width:24.34px;height:13.90px;background:#e47ee6;border-radius:4px"></div>
<span class="t" style="left:398.71px;top:343.22px;font-size:7.30px;line-height:10px;transform:scaleX(1.0852);color:#fbeafc;">1.46</span>
<span class="t" style="left:393.95px;top:354.14px;font-size:8.60px;line-height:12px;transform:scaleX(1.0411);color:#444444;">£47.02</span>
<span class="t" style="left:394.62px;top:363.98px;font-size:8.60px;line-height:12px;transform:scaleX(1.0471);color:#444444;">Betfair</span>
<span class="t" style="left:457.03px;top:343.14px;font-size:7.30px;line-height:10px;transform:scaleX(1.0852);color:#fbeafc;">1.11</span>
<span class="t" style="left:451.90px;top:354.14px;font-size:8.60px;line-height:12px;transform:scaleX(1.0411);color:#444444;">£51.85</span>
<span class="t" style="left:452.62px;top:363.98px;font-size:8.60px;line-height:12px;transform:scaleX(1.0471);color:#444444;">Betfair</span>
<span class="t" style="left:524.82px;top:341.42px;font-size:9.00px;line-height:12px;transform:scaleX(1.1007);color:#444444;">2</span>
<span class="t" style="left:520.67px;top:351.80px;font-size:9.00px;line-height:12px;transform:scaleX(1.1007);color:#444444;">1/4</span>
<span class="t" style="left:520.85px;top:362.24px;font-size:9.00px;line-height:12px;transform:scaleX(1.1007);color:#444444;">5/5</span>
<span class="t" style="left:581.23px;top:352.11px;font-size:9.50px;line-height:13px;transform:scaleX(0.9621);color:#5a7fd0;">Visit</span>
<div class="b" style="left:582.30px;top:361.80px;width:16.10px;height:0.80px;background:#7f9bdc"></div>
<svg class="b" style="left:632.3px;top:349.90px" width="13.6" height="13.6" viewBox="0 0 14 14"><rect width="14" height="14" rx="2.4" fill="#3a70d2"/><rect x="2.5" y="2.5" width="9" height="9" fill="none" stroke="#fff" stroke-width="1.3"/><path d="M7 3v8M3 7h8" stroke="#fff" stroke-width="1.2"/></svg><svg class="b" style="left:654.8px;top:349.90px" width="13.6" height="13.6" viewBox="0 0 14 14"><rect width="14" height="14" rx="2.4" fill="#ecbb2c"/><path d="M4.2 3.6h5.6M5.8 3.4v-0.8h2.4v0.8M4.6 4.4l0.6 6.8h3.6l0.6-6.8z" stroke="#fffaf0" stroke-width="1.05" fill="none"/><path d="M6.3 5.8v3.8M7.7 5.8v3.8" stroke="#fffaf0" stroke-width="0.8"/></svg><svg class="b" style="left:677px;top:349.90px" width="14" height="13.6" viewBox="0 0 14 14"><rect width="14" height="14" rx="2.4" fill="#21803b"/><path d="M3 3h8v5.3l-2.7 2.7h-5.3z" fill="none" stroke="#fff" stroke-width="1.2"/><path d="M8.3 11v-2.7h2.7" fill="none" stroke="#fff" stroke-width="1"/><path d="M4.8 5.2h4.4M4.8 7h2.4" stroke="#fff" stroke-width="1.1"/></svg>
<div class="b" style="left:28.13px;top:392.00px;width:33.93px;height:13.20px;background:#a8182f;border-radius:5.5px"></div>
<span class="t" style="left:33.24px;top:392.91px;font-size:9.70px;line-height:13px;transform:scaleX(0.9302);color:#fff;">98.21</span>
<span class="t" style="left:79.14px;top:381.30px;font-size:9.40px;line-height:13px;transform:scaleX(0.9233);color:#444444;">Leicester</span>
<span class="t" style="left:74.60px;top:391.78px;font-size:9.40px;line-height:13px;transform:scaleX(0.9339);color:#444444;">10.05.2025</span>
<span class="t" style="left:82.29px;top:401.56px;font-size:9.40px;line-height:13px;transform:scaleX(0.9404);color:#444444;">20:00</span>
<svg class="b" style="left:116.40px;top:409.30px" width="5.2" height="5.2" viewBox="0 0 5.2 5.2"><path d="M0.8 0.8l3.6 3.6M4.4 0.8l-3.6 3.6" stroke="#2a2a2a" stroke-width="1.15" stroke-linecap="round"/></svg>
<svg class="b" style="left:210.00px;top:409.50px" width="5.2" height="5.2" viewBox="0 0 5.2 5.2"><path d="M0.8 0.8l3.6 3.6M4.4 0.8l-3.6 3.6" stroke="#2a2a2a" stroke-width="1.15" stroke-linecap="round"/></svg>
<span class="t" style="left:151.40px;top:391.84px;font-size:9.40px;line-height:13px;transform:scaleX(0.8849);color:#444444;">Kracking</span>
<span class="t" style="left:222.01px;top:392.80px;font-size:9.50px;line-height:13px;transform:scaleX(0.9671);color:#5a7fd0;">More info</span>
<div class="b" style="left:223.70px;top:402.50px;width:36.10px;height:0.80px;background:#7f9bdc"></div>
<svg class="b" style="left:272px;top:392.20px" width="46" height="11.1" viewBox="0 0 46 11.1"><defs><linearGradient id="g365" x1="0" y1="0" x2="0" y2="1"><stop offset="0" stop-color="#42a673"/><stop offset="1" stop-color="#1f7f50"/></linearGradient></defs><rect width="46" height="11.1" rx="0.6" fill="url(#g365)"/><text x="3.6" y="9.0" font-family="Liberation Sans" font-weight="bold" font-size="10.4" fill="#fff" stroke="#fff" stroke-width="0.45" textLength="18.3" lengthAdjust="spacingAndGlyphs">bet</text><text x="22.6" y="9.0" font-family="Liberation Sans" font-weight="bold" font-size="10.4" fill="#f4ec2e" stroke="#f4ec2e" stroke-width="0.45" textLength="19.8" lengthAdjust="spacingAndGlyphs">365</text></svg>
<div class="b" style="left:338.60px;top:392.50px;width:27.40px;height:12.80px;background:#4a78c8;border-radius:6px"></div>
<span class="t" style="left:342.98px;top:392.77px;font-size:9.70px;line-height:13px;transform:scaleX(0.9140);color:#fff;">6.00</span>
<div class="b" style="left:396.86px;top:381.50px;width:21.49px;height:13.90px;background:#e47ee6;border-radius:4px"></div>
<div class="b" style="left:455.14px;top:381.50px;width:21.23px;height:13.90px;background:#e47ee6;border-radius:4px"></div>
<span class="t" style="left:400.97px;top:384.12px;font-size:7.30px;line-height:10px;transform:scaleX(1.0852);color:#fbeafc;">6.4</span>
<span class="t" style="left:393.90px;top:395.04px;font-size:8.60px;line-height:12px;transform:scaleX(1.0411);color:#444444;">£67.45</span>
<span class="t" style="left:385.52px;top:404.88px;font-size:8.60px;line-height:12px;transform:scaleX(1.0471);color:#444444;">Matchbook</span>
<span class="t" style="left:458.93px;top:384.12px;font-size:7.30px;line-height:10px;transform:scaleX(1.0852);color:#fbeafc;">1.9</span>
<span class="t" style="left:460.63px;top:395.04px;font-size:8.60px;line-height:12px;transform:scaleX(1.0411);color:#444444;">£5</span>
<span class="t" style="left:443.52px;top:404.88px;font-size:8.60px;line-height:12px;transform:scaleX(1.0471);color:#444444;">Matchbook</span>
<span class="t" style="left:524.82px;top:382.32px;font-size:9.00px;line-height:12px;transform:scaleX(1.1007);color:#444444;">3</span>
<span class="t" style="left:520.72px;top:392.70px;font-size:9.00px;line-height:12px;transform:scaleX(1.1007);color:#444444;">1/5</span>
<span class="t" style="left:520.85px;top:403.14px;font-size:9.00px;line-height:12px;transform:scaleX(1.1007);color:#444444;">7/7</span>
<span class="t" style="left:581.23px;top:393.01px;font-size:9.50px;line-height:13px;transform:scaleX(0.9621);color:#5a7fd0;">Visit</span>
<div class="b" style="left:582.30px;top:402.70px;width:16.10px;height:0.80px;background:#7f9bdc"></div>
<svg class="b" style="left:632.3px;top:390.80px" width="13.6" height="13.6" viewBox="0 0 14 14"><rect width="14" height="14" rx="2.4" fill="#3a70d2"/><rect x="2.5" y="2.5" width="9" height="9" fill="none" stroke="#fff" stroke-width="1.3"/><path d="M7 3v8M3 7h8" stroke="#fff" stroke-width="1.2"/></svg><svg class="b" style="left:654.8px;top:390.80px" width="13.6" height="13.6" viewBox="0 0 14 14"><rect width="14" height="14" rx="2.4" fill="#ecbb2c"/><path d="M4.2 3.6h5.6M5.8 3.4v-0.8h2.4v0.8M4.6 4.4l0.6 6.8h3.6l0.6-6.8z" stroke="#fffaf0" stroke-width="1.05" fill="none"/><path d="M6.3 5.8v3.8M7.7 5.8v3.8" stroke="#fffaf0" stroke-width="0.8"/></svg><svg class="b" style="left:677px;top:390.80px" width="14" height="13.6" viewBox="0 0 14 14"><rect width="14" height="14" rx="2.4" fill="#21803b"/><path d="M3 3h8v5.3l-2.7 2.7h-5.3z" fill="none" stroke="#fff" stroke-width="1.2"/><path d="M8.3 11v-2.7h2.7" fill="none" stroke="#fff" stroke-width="1"/><path d="M4.8 5.2h4.4M4.8 7h2.4" stroke="#fff" stroke-width="1.1"/></svg>
</body></html>
